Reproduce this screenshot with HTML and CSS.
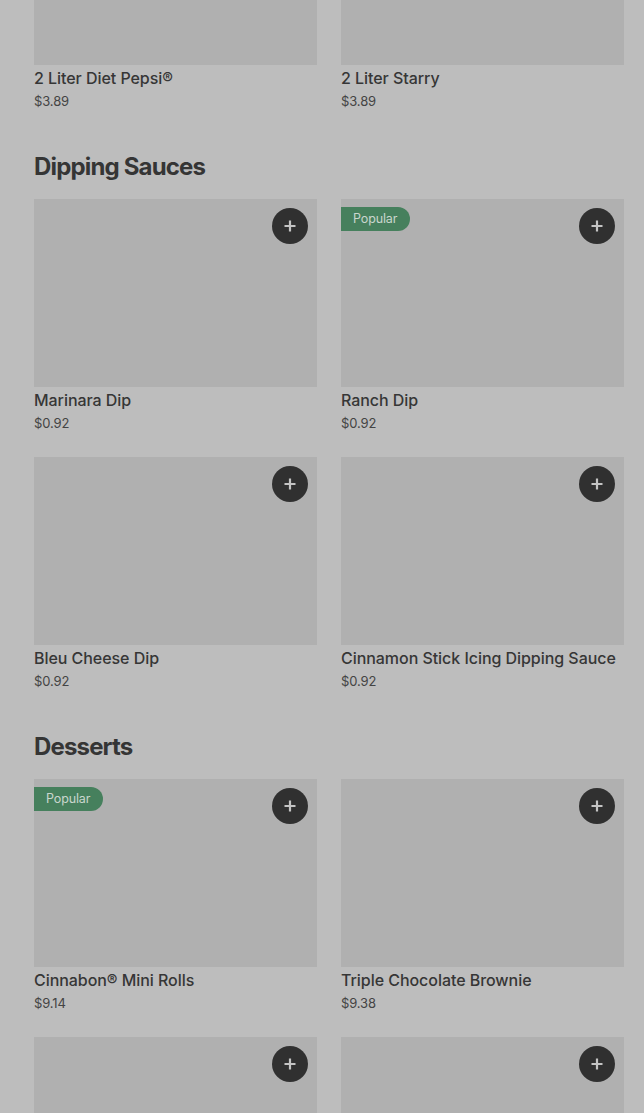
FILE: index.html
```html
<!DOCTYPE html>
<html lang="en">
<head>
<meta charset="utf-8">
<title>Menu</title>
<link rel="stylesheet" href="styles.css">
</head>
<body>
<main class="menu">
  <section class="section first">
    <div class="grid">
      <div class="card">
        <div class="thumb"></div>
        <div class="name">2 Liter Diet Pepsi®</div>
        <div class="price">$3.89</div>
      </div>
      <div class="card">
        <div class="thumb"></div>
        <div class="name">2 Liter Starry</div>
        <div class="price">$3.89</div>
      </div>
    </div>
  </section>

  <section class="section">
    <h2 class="heading">Dipping Sauces</h2>
    <div class="grid">
      <div class="card">
        <div class="thumb">
          <button class="add" aria-label="Add"><svg viewBox="0 0 14 14" width="14" height="14"><path d="M7 1.5v11M1.5 7h11" stroke="currentColor" stroke-width="2.2" fill="none"/></svg></button>
        </div>
        <div class="name">Marinara Dip</div>
        <div class="price">$0.92</div>
      </div>
      <div class="card">
        <div class="thumb">
          <span class="badge">Popular</span>
          <button class="add" aria-label="Add"><svg viewBox="0 0 14 14" width="14" height="14"><path d="M7 1.5v11M1.5 7h11" stroke="currentColor" stroke-width="2.2" fill="none"/></svg></button>
        </div>
        <div class="name">Ranch Dip</div>
        <div class="price">$0.92</div>
      </div>
      <div class="card">
        <div class="thumb">
          <button class="add" aria-label="Add"><svg viewBox="0 0 14 14" width="14" height="14"><path d="M7 1.5v11M1.5 7h11" stroke="currentColor" stroke-width="2.2" fill="none"/></svg></button>
        </div>
        <div class="name">Bleu Cheese Dip</div>
        <div class="price">$0.92</div>
      </div>
      <div class="card">
        <div class="thumb">
          <button class="add" aria-label="Add"><svg viewBox="0 0 14 14" width="14" height="14"><path d="M7 1.5v11M1.5 7h11" stroke="currentColor" stroke-width="2.2" fill="none"/></svg></button>
        </div>
        <div class="name">Cinnamon Stick Icing Dipping Sauce</div>
        <div class="price">$0.92</div>
      </div>
    </div>
  </section>

  <section class="section">
    <h2 class="heading">Desserts</h2>
    <div class="grid">
      <div class="card">
        <div class="thumb">
          <span class="badge">Popular</span>
          <button class="add" aria-label="Add"><svg viewBox="0 0 14 14" width="14" height="14"><path d="M7 1.5v11M1.5 7h11" stroke="currentColor" stroke-width="2.2" fill="none"/></svg></button>
        </div>
        <div class="name">Cinnabon® Mini Rolls</div>
        <div class="price">$9.14</div>
      </div>
      <div class="card">
        <div class="thumb">
          <button class="add" aria-label="Add"><svg viewBox="0 0 14 14" width="14" height="14"><path d="M7 1.5v11M1.5 7h11" stroke="currentColor" stroke-width="2.2" fill="none"/></svg></button>
        </div>
        <div class="name">Triple Chocolate Brownie</div>
        <div class="price">$9.38</div>
      </div>
      <div class="card">
        <div class="thumb">
          <button class="add" aria-label="Add"><svg viewBox="0 0 14 14" width="14" height="14"><path d="M7 1.5v11M1.5 7h11" stroke="currentColor" stroke-width="2.2" fill="none"/></svg></button>
        </div>
        <div class="name">&nbsp;</div>
        <div class="price">&nbsp;</div>
      </div>
      <div class="card">
        <div class="thumb">
          <button class="add" aria-label="Add"><svg viewBox="0 0 14 14" width="14" height="14"><path d="M7 1.5v11M1.5 7h11" stroke="currentColor" stroke-width="2.2" fill="none"/></svg></button>
        </div>
        <div class="name">&nbsp;</div>
        <div class="price">&nbsp;</div>
      </div>
    </div>
  </section>
</main>
</body>
</html>
```

FILE: styles.css
```css
html, body {
  margin: 0;
  padding: 0;
  background: #bdbdbd;
  overflow: hidden;
}

body {
  font-family: "Inter", "Liberation Sans", sans-serif;
  color: #333333;
}

.menu {
  padding: 0 20px 0 34px;
  height: 1113px;
  overflow: hidden;
}

.section.first {
  margin-top: -123px;
}

.heading {
  margin: 40px 0 16px;
  font-size: 24px;
  line-height: 32px;
  font-weight: 700;
  letter-spacing: -0.035em;
  color: #353535;
}

.grid {
  display: grid;
  grid-template-columns: 283px 283px;
  column-gap: 24px;
  row-gap: 24px;
}

.card {
  display: flex;
  flex-direction: column;
}

.thumb {
  position: relative;
  height: 188px;
  background: #b0b0b0;
}

.name {
  margin-top: 2px;
  font-size: 16px;
  line-height: 22px;
  font-weight: 500;
  color: #363636;
  white-space: nowrap;
  letter-spacing: -0.003em;
}

.price {
  margin-top: 2px;
  font-size: 13px;
  line-height: 20px;
  color: #444444;
  letter-spacing: -0.01em;
}

.add {
  position: absolute;
  top: 9px;
  right: 9px;
  width: 36px;
  height: 36px;
  border: none;
  border-radius: 50%;
  background: #303030;
  color: #c4c4c4;
  padding: 0;
  display: flex;
  align-items: center;
  justify-content: center;
}

.badge {
  position: absolute;
  top: 8px;
  left: 0;
  height: 24px;
  padding: 0 13px 0 12px;
  border-radius: 0 12px 12px 0;
  background: #46805d;
  color: #c9d6cd;
  font-size: 12.5px;
  line-height: 24px;
  letter-spacing: -0.01em;
}
```
